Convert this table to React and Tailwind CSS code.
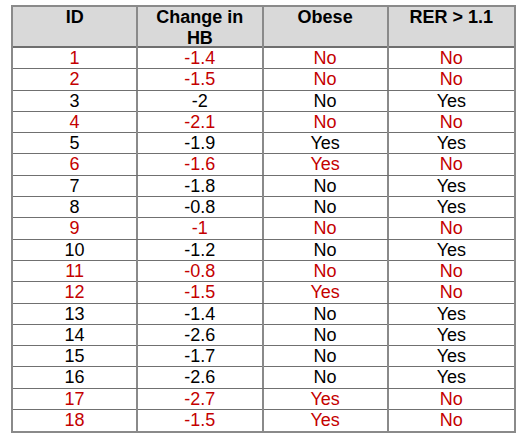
import React from "react";

const rows = [
  [1, "-1.4", "No", "No", true],
  [2, "-1.5", "No", "No", true],
  [3, "-2", "No", "Yes", false],
  [4, "-2.1", "No", "No", true],
  [5, "-1.9", "Yes", "Yes", false],
  [6, "-1.6", "Yes", "No", true],
  [7, "-1.8", "No", "Yes", false],
  [8, "-0.8", "No", "Yes", false],
  [9, "-1", "No", "No", true],
  [10, "-1.2", "No", "Yes", false],
  [11, "-0.8", "No", "No", true],
  [12, "-1.5", "Yes", "No", true],
  [13, "-1.4", "No", "Yes", false],
  [14, "-2.6", "No", "Yes", false],
  [15, "-1.7", "No", "Yes", false],
  [16, "-2.6", "No", "Yes", false],
  [17, "-2.7", "Yes", "No", true],
  [18, "-1.5", "Yes", "No", true],
];

export default function App() {
  return (
    <div className="bg-white w-[517px] h-[433px] pt-[5px] pl-[11px] font-['Liberation_Sans',Arial,sans-serif] text-[18px] leading-[21px]">
      <div className="w-[505px] border-2 border-[#8a8a8a]">
        <div className="grid grid-cols-4 h-[41px] bg-[#d9d9d9] border-b-2 border-[#6f6f6f] font-bold text-black text-center">
          <div className="border-r-2 border-[#8a8a8a]">ID</div>
          <div className="border-r-2 border-[#8a8a8a]">Change in<br />HB</div>
          <div className="border-r-2 border-[#8a8a8a]">Obese</div>
          <div>RER &gt; 1.1</div>
        </div>
        {rows.map((r, i) => (
          <div
            key={r[0]}
            className={`grid grid-cols-4 h-[21.3px] text-center ${r[4] ? "text-[#c40000]" : "text-black"} ${i < rows.length - 1 ? "border-b border-[#707070]" : ""}`}
          >
            <div className="border-r-2 border-[#8a8a8a] flex items-center justify-center">{r[0]}</div>
            <div className="border-r-2 border-[#8a8a8a] flex items-center justify-center">{r[1]}</div>
            <div className="border-r-2 border-[#8a8a8a] flex items-center justify-center">{r[2]}</div>
            <div className="flex items-center justify-center">{r[3]}</div>
          </div>
        ))}
      </div>
    </div>
  );
}
